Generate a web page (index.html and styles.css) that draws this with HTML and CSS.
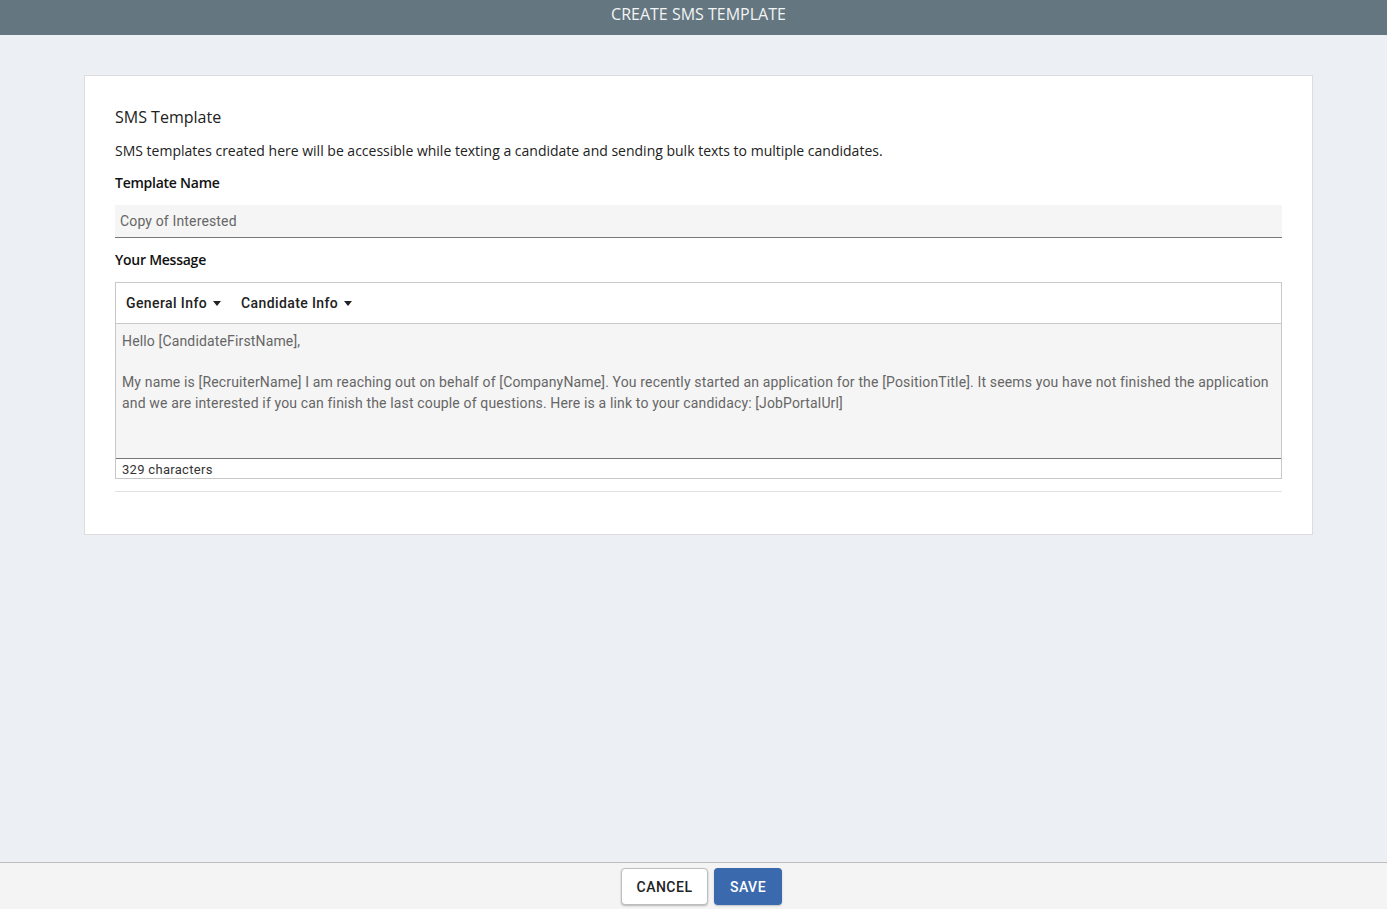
FILE: index.html
```html
<!DOCTYPE html>
<html lang="en">
<head>
  <meta charset="UTF-8" />
  <title>Create SMS Template</title>
  <link rel="stylesheet" href="styles.css">
</head>
<body>

  <!-- top bar -->
  <div class="topbar">CREATE SMS TEMPLATE</div>

  <div class="main">
    <div class="card">
      <h2 class="card-title">SMS Template</h2>
      <p class="card-desc">SMS templates created here will be accessible while texting a candidate and sending bulk texts to multiple candidates.</p>

      <label class="field-label">Template Name</label>
      <div class="text-input">Copy of Interested</div>

      <label class="field-label">Your Message</label>
      <div class="editor">
        <div class="editor-toolbar">
          <span class="menu">General Info <span class="caret"></span></span>
          <span class="menu">Candidate Info <span class="caret"></span></span>
        </div>
        <div class="editor-body">
          <p>Hello [CandidateFirstName],</p>
          <p>&nbsp;</p>
          <p>My name is [RecruiterName] I am reaching out on behalf of [CompanyName]. You recently started an application for the [PositionTitle]. It seems you have not finished the application and we are interested if you can finish the last couple of questions. Here is a link to your candidacy: [JobPortalUrl]</p>
        </div>
        <div class="editor-count">329 characters</div>
      </div>

      <hr class="divider">
    </div>
  </div>

  <!-- footer actions -->
  <div class="footer">
    <button class="btn btn-cancel">CANCEL</button>
    <button class="btn btn-save">SAVE</button>
  </div>

</body>
</html>
```

FILE: styles.css
```css
* { margin: 0; padding: 0; box-sizing: border-box; }
html, body {
  height: 100%;
}
body {
  display: flex;
  flex-direction: column;
  background: #eceff4;
  font-family: "Open Sans", sans-serif;
  color: #333;
  overflow: hidden;
}

.topbar {
  height: 35px;
  line-height: 29px;
  padding-left: 10px;
  background: #647680;
  color: #f2f4f5;
  text-align: center;
  font-size: 16px;
  font-weight: 400;
  flex-shrink: 0;
}

.main {
  flex: 1;
  padding: 40px 74px 0 84px;
}

.card {
  background: #fff;
  border: 1px solid #dcdcdc;
  padding: 30px 30px 42px;
  display: flex;
  flex-direction: column;
}

.card-title {
  font-size: 16px;
  font-weight: 400;
  line-height: 22px;
  color: #222;
}
.card-desc {
  margin-top: 13px;
  font-size: 14px;
  line-height: 20px;
  color: #222;
}

.field-label {
  margin-top: 12px;
  font-size: 14px;
  line-height: 20px;
  font-weight: 600;
  letter-spacing: -0.25px;
  color: #111;
}

.text-input {
  margin-top: 12px;
  height: 33px;
  line-height: 32px;
  padding: 0 5px;
  background: #f5f5f5;
  border-bottom: 1px solid #777;
  font-family: Roboto, sans-serif;
  font-size: 14px;
  color: #666;
  letter-spacing: 0.15px;
}

.editor {
  margin-top: 12px;
  border: 1px solid #c8c8c8;
  font-family: Roboto, sans-serif;
}
.editor-toolbar {
  height: 41px;
  display: flex;
  align-items: center;
  gap: 20px;
  padding: 0 10px;
  border-bottom: 1px solid #c8c8c8;
}
.menu {
  font-size: 14px;
  font-weight: 500;
  color: #222;
  letter-spacing: 0.4px;
}
.caret {
  display: inline-block;
  width: 0;
  height: 0;
  margin-left: 2px;
  vertical-align: 2px;
  border-left: 4.5px solid transparent;
  border-right: 4.5px solid transparent;
  border-top: 5px solid #222;
}

.editor-body {
  height: 135px;
  padding: 7px 6px;
  background: #f5f5f5;
  border-bottom: 1px solid #777;
  font-size: 14px;
  line-height: 20.5px;
  color: #666;
  letter-spacing: 0.15px;
}

.editor-count {
  height: 19px;
  line-height: 21px;
  padding: 0 6px;
  font-size: 13px;
  color: #333;
  letter-spacing: 0.3px;
}

.divider {
  margin-top: 12px;
  border: none;
  border-top: 1px solid #e2e2e2;
}

.footer {
  height: 47px;
  flex-shrink: 0;
  background: #f4f4f4;
  border-top: 1px solid #bdbdbd;
  display: flex;
  justify-content: center;
  align-items: flex-start;
  gap: 6px;
  padding: 5px 0 0 16px;
}
.btn {
  height: 37px;
  border-radius: 4px;
  font-family: Roboto, sans-serif;
  font-size: 14px;
  font-weight: 500;
  letter-spacing: 0.5px;
  cursor: pointer;
}
.btn-cancel {
  width: 87px;
  background: #fff;
  color: #222;
  border: 1px solid #bdbdbd;
  box-shadow: 0 1px 2px rgba(0,0,0,0.25);
}
.btn-save {
  width: 68px;
  background: #3a69ae;
  color: #fff;
  border: none;
  box-shadow: 0 1px 2px rgba(0,0,0,0.2);
}
```
